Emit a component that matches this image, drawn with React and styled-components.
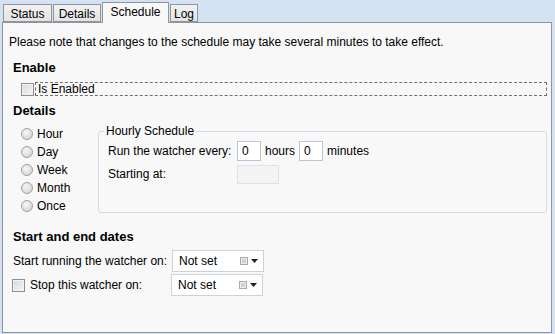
import React from "react";
import styled, { createGlobalStyle } from "styled-components";

const Global = createGlobalStyle`
  html, body { margin: 0; padding: 0; }
  body {
    background: #d5e2f2;
    font-family: "Liberation Sans", Arial, sans-serif;
    font-size: 12px;
    color: #000;
  }
`;

const Page = styled.div`
  width: 555px;
  height: 334px;
  box-sizing: border-box;
  padding: 2px 3px 1px 2px;
  display: flex;
  flex-direction: column;
`;

const TabBar = styled.div`
  display: flex;
  align-items: flex-end;
  height: 20px;
  padding-left: 1px;
  gap: 1px;
  position: relative;
  z-index: 1;
`;

const Tab = styled.div`
  box-sizing: border-box;
  width: ${(p) => p.$w}px;
  text-align: center;
  height: ${(p) => (p.$active ? "21px" : "18px")};
  margin-bottom: ${(p) => (p.$active ? "-1px" : "0")};
  padding-top: 2px;
  border: 1px solid #8f959e;
  border-bottom: ${(p) => (p.$active ? "none" : "1px solid #8f959e")};
  background: ${(p) => (p.$active ? "#f8f8f8" : "linear-gradient(#f2f2f2, #e4e4e4)")};
  font-size: 12px;
  line-height: 14px;
  color: #000;
`;

const Panel = styled.div`
  flex: 1;
  border: 1px solid #8f959e;
  background: #f8f8f8;
  padding: 12px 4px 0 6px;
`;

const Note = styled.div`
  line-height: 14px;
`;

const Heading = styled.div`
  font-weight: bold;
  font-size: 13px;
  line-height: 16px;
  margin: ${(p) => p.$m || "0"};
`;

const FocusRow = styled.label`
  display: flex;
  align-items: center;
  margin: 6px 0 0 12px;
  height: 14px;
`;

const Box = styled.span`
  box-sizing: border-box;
  width: 13px;
  height: 13px;
  border: 1px solid #8f8f8f;
  background: linear-gradient(135deg, #d8d8d8, #f6f6f6);
  box-shadow: inset 0 0 0 1px #f2f2f2;
  flex: none;
`;

const Dashed = styled.span`
  flex: 1;
  margin-left: 1px;
  border: 1px dashed #707070;
  line-height: 12px;
  padding-left: 2px;
  box-sizing: border-box;
  height: 14px;
`;

const DetailsWrap = styled.div`
  display: flex;
  align-items: flex-start;
`;

const RadioCol = styled.div`
  display: flex;
  flex-direction: column;
  box-sizing: border-box;
  width: 89px;
  flex: none;
  padding-left: 12px;
  padding-top: 6px;
`;

const RadioRow = styled.div`
  display: flex;
  align-items: center;
  height: 18px;
  gap: 4px;
`;

const Radio = styled.span`
  box-sizing: border-box;
  width: 12px;
  height: 12px;
  border-radius: 50%;
  border: 1px solid #a0a0a0;
  background: radial-gradient(circle at 40% 35%, #f6f6f6, #cdcdcd);
  flex: none;
`;

const Fieldset = styled.fieldset`
  flex: 1;
  margin: 5px 0 0 0;
  padding: 2px 8px 0 9px;
  height: 89px;
  box-sizing: border-box;
  border: 1px solid #d3dbe4;
  border-radius: 3px;
  min-width: 0;
`;

const Legend = styled.legend`
  padding: 0 2px;
  margin-left: -4px;
  font-size: 12px;
  line-height: 14px;
`;

const FormRow = styled.div`
  display: flex;
  align-items: center;
  height: ${(p) => p.$h || "22px"};
  gap: 4px;
`;

const Label = styled.span`
  width: ${(p) => p.$w || "auto"};
  flex: none;
`;

const NumInput = styled.input`
  box-sizing: border-box;
  width: ${(p) => p.$w || "24px"};
  height: ${(p) => p.$h || "20px"};
  border: 1px solid ${(p) => (p.disabled ? "#dde3ea" : "#b9c6d4")};
  background: ${(p) => (p.disabled ? "#f4f4f4" : "#fff")};
  font-family: "Liberation Sans", Arial, sans-serif;
  font-size: 12px;
  padding: 0 4px;
  margin: 0;
  outline: none;
`;

const Select = styled.div`
  box-sizing: border-box;
  width: 92px;
  height: 22px;
  border: 1px solid #c9d3de;
  background: #fff;
  display: flex;
  align-items: center;
  padding: 0 5px 0 6px;
`;

const SelectText = styled.span`
  flex: 1;
`;

const DateRow = styled.div`
  display: flex;
  align-items: center;
  height: 24px;
`;

const DateLabel = styled.span`
  width: 159px;
  display: flex;
  align-items: center;
  gap: 5px;
  margin-left: ${(p) => p.$ml || "0"};
`;

const CalIcon = () => (
  <svg width="8" height="8" viewBox="0 0 8 8" style={{ marginRight: 3 }}>
    <rect x="0.5" y="0.5" width="7" height="7" fill="#ececec" stroke="#aaaaaa" />
    <rect x="2" y="2" width="4" height="4" fill="#d2d2d2" />
  </svg>
);

const Arrow = () => (
  <svg width="7" height="4" viewBox="0 0 7 4">
    <path d="M0 0H7L3.5 4Z" fill="#222" />
  </svg>
);

const Picker = () => (
  <Select>
    <SelectText>Not set</SelectText>
    <CalIcon />
    <Arrow />
  </Select>
);

export default function App() {
  return (
    <Page>
      <Global />
      <TabBar>
        <Tab $w={49}>Status</Tab>
        <Tab $w={48}>Details</Tab>
        <Tab $w={67} $active>Schedule</Tab>
        <Tab $w={28}>Log</Tab>
      </TabBar>
      <Panel>
        <Note>Please note that changes to the schedule may take several minutes to take effect.</Note>
        <Heading $m="11px 0 0 4px">Enable</Heading>
        <FocusRow>
          <Box />
          <Dashed>Is Enabled</Dashed>
        </FocusRow>
        <Heading $m="7px 0 0 4px">Details</Heading>
        <DetailsWrap>
          <RadioCol>
            {["Hour", "Day", "Week", "Month", "Once"].map((r) => (
              <RadioRow key={r}>
                <Radio />
                {r}
              </RadioRow>
            ))}
          </RadioCol>
          <Fieldset>
            <Legend>Hourly Schedule</Legend>
            <FormRow>
              <Label $w="125px">Run the watcher every:</Label>
              <NumInput defaultValue="0" />
              <span>hours</span>
              <NumInput defaultValue="0" />
              <span>minutes</span>
            </FormRow>
            <FormRow $h="24px">
              <Label $w="125px">Starting at:</Label>
              <NumInput disabled $w="42px" $h="19px" />
            </FormRow>
          </Fieldset>
        </DetailsWrap>
        <Heading $m="14px 0 4px 4px">Start and end dates</Heading>
        <DateRow>
          <DateLabel $ml="4px">Start running the watcher on:</DateLabel>
          <Picker />
        </DateRow>
        <DateRow>
          <DateLabel $ml="3px">
            <Box />
            Stop this watcher on:
          </DateLabel>
          <Picker />
        </DateRow>
      </Panel>
    </Page>
  );
}
